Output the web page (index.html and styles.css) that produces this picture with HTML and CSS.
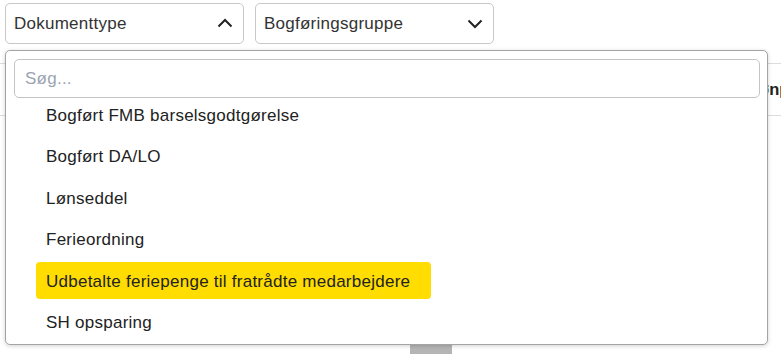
FILE: index.html
```html
<!DOCTYPE html>
<html lang="da">
<head>
    <meta charset="UTF-8">
    <meta name="viewport" content="width=device-width, initial-scale=1.0">
    <link rel="stylesheet" href="styles.css">
</head>
<body>
    <div class="filters">
        <div class="select open">
            <span>Dokumenttype</span>
            <svg class="chevron" width="16" height="10" viewBox="0 0 16 10"><path d="M1.5 8.5 L8 2 L14.5 8.5" fill="none" stroke="#222" stroke-width="2"/></svg>
        </div>
        <div class="select">
            <span>Bogføringsgruppe</span>
            <svg class="chevron" width="16" height="10" viewBox="0 0 16 10"><path d="M1.5 1.5 L8 8 L14.5 1.5" fill="none" stroke="#222" stroke-width="2"/></svg>
        </div>
    </div>

    <div class="table">
        <div class="table-head">
            <div>Dato</div>
            <div>Medarbejder</div>
            <div>Dokumenttype</div>
            <div class="clip">Lønp</div>
        </div>
    </div>

    <div class="page-btn"><span></span></div>

    <div class="dropdown">
        <input class="search" type="text" placeholder="Søg...">
        <ul class="options">
            <li>Bogført FMB barselsgodtgørelse</li>
            <li>Bogført DA/LO</li>
            <li>Lønseddel</li>
            <li>Ferieordning</li>
            <li class="active">Udbetalte feriepenge til fratrådte medarbejdere</li>
            <li>SH opsparing</li>
        </ul>
    </div>
</body>
</html>
```

FILE: styles.css
```css
* {
    margin: 0;
    padding: 0;
    box-sizing: border-box;
    font-family: "Liberation Sans", Arial, sans-serif;
}

:root {
    --yellow: #ffdd00;
    --line: #dcdcdc;
    --text: #222;
}

body {
    background: white;
    color: var(--text);
    font-size: 17px;
    letter-spacing: 0.25px;
    position: relative;
    height: 354px;
    overflow: hidden;
}

.filters {
    display: flex;
    gap: 11px;
    padding: 3px 5px 0;
}

.select {
    width: 239px;
    height: 41px;
    border: 1px solid #c8c8c8;
    border-radius: 5px;
    display: flex;
    align-items: center;
    justify-content: space-between;
    padding: 0 10px 0 8px;
    color: #333;
}

.select.open .chevron {
    margin-top: -1px;
}

.table {
    margin-top: 19px;
    border-top: 1px solid var(--line);
}

.table-head {
    display: grid;
    grid-template-columns: 180px 280px 284px 1fr;
    padding: 0 0 0 5px;
    height: 52px;
    align-items: center;
    border-bottom: 1px solid var(--line);
    font-weight: bold;
    font-size: 16.5px;
    letter-spacing: 0;
    white-space: nowrap;
}

.table-head .clip {
    overflow: hidden;
}

.page-btn {
    margin: 214px 0 0 410px;
    width: 42px;
    height: 30px;
    background: #b5b5b5;
    border-radius: 3px;
    display: flex;
    justify-content: center;
}

.page-btn span {
    width: 12px;
    height: 18px;
    margin-top: -14px;
    background: #e4e4e4;
    border-radius: 3px;
}

.dropdown {
    position: absolute;
    left: 5px;
    top: 50px;
    width: 763px;
    height: 295px;
    background: white;
    border: 1px solid #a4a4a4;
    border-radius: 5px;
    box-shadow: 0 1px 4px rgba(0, 0, 0, 0.18);
    overflow: hidden;
}

.search {
    display: block;
    margin: 8px 7px 0 8px;
    width: 746px;
    height: 39px;
    border: 1px solid #c4c4c4;
    border-radius: 5px;
    padding: 0 10px;
    font-size: 17px;
    letter-spacing: 0.25px;
    outline: none;
}

.search::placeholder {
    color: #9ba4b2;
}

.options {
    list-style: none;
    display: flex;
    flex-direction: column;
    align-items: flex-start;
    gap: 4.4px;
    margin-top: -2px;
    padding-left: 30px;
}

.options li {
    height: 37px;
    line-height: 34px;
    padding: 3px 21px 0 10px;
    border-radius: 4px;
    white-space: nowrap;
}

.options li.active {
    background: var(--yellow);
}
```
